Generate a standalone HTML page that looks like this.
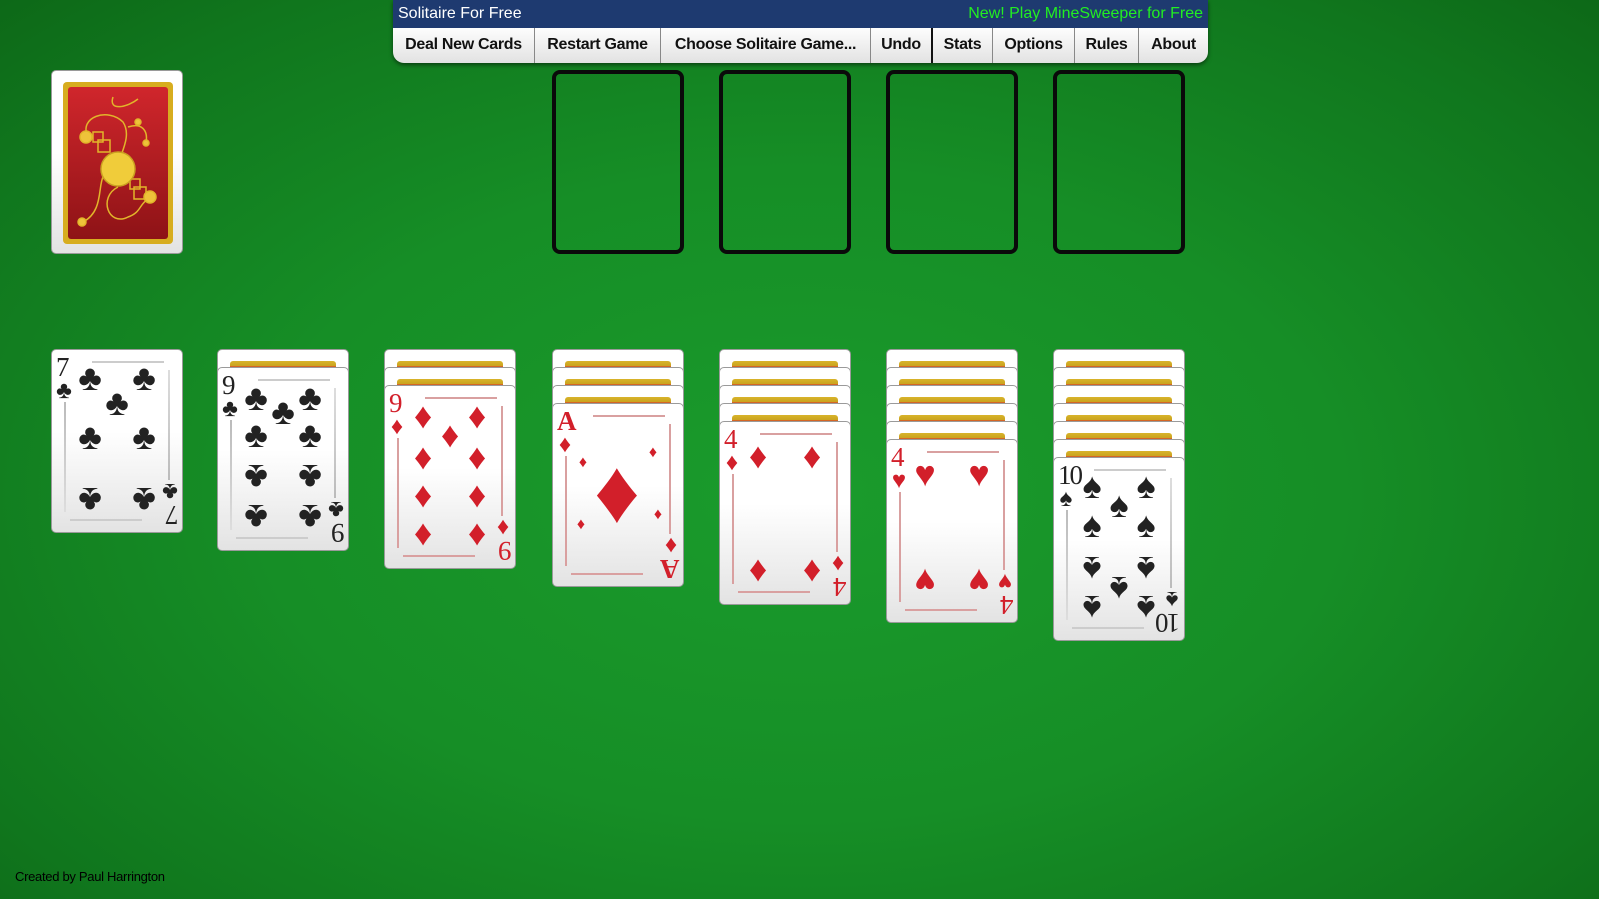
<!DOCTYPE html>
<html><head><meta charset="utf-8"><style>
*{margin:0;padding:0;box-sizing:border-box}
body{width:1599px;height:899px;overflow:hidden;position:relative;font-family:"Liberation Sans",Arial,sans-serif;
background:radial-gradient(ellipse 75% 80% at 50% 55%,#1a9b2c 0%,#168e26 45%,#10761d 80%,#0c6516 100%)}
#menu{position:absolute;left:393px;top:0;width:815px;height:63px;border-radius:0 0 11px 11px;overflow:hidden;box-shadow:0 2px 4px rgba(0,0,0,.5)}
#title{height:28px;background:#1e3a70;color:#fff;font-size:16px;line-height:27px;padding-left:5px;position:relative}
#title span{position:absolute;right:5px;top:0;color:#22ee22}
#btns{height:35px;background:linear-gradient(#fdfdfd,#e2e2e2);position:relative}
#btns div{position:absolute;top:0;height:35px;line-height:34px;text-align:center;font-weight:bold;font-size:16px;color:#111;border-left:1px solid #888;letter-spacing:-0.3px}
.card{position:absolute;width:132px;height:184px;border-radius:5px;border:1px solid #9a9a9a;background:linear-gradient(#fff 0%,#fff 45%,#e3e3e3 100%);overflow:hidden}
.down::after{content:"";position:absolute;left:12px;right:12px;top:11px;height:9px;border-radius:3px 3px 0 0;background:linear-gradient(#d8b42a 0,#c9a21e 60%,#e02a2a 60%,#e02a2a 100%)}
.slot{position:absolute;width:132px;height:184px;border:4px solid #0a0a0a;border-radius:8px}
.rk{position:absolute;font-family:"Liberation Serif",serif;font-size:27px;line-height:26px;left:4px;top:4px}
.rk2{position:absolute;font-family:"Liberation Serif",serif;font-size:27px;line-height:26px;right:4px;bottom:4px;transform:rotate(180deg)}
.cs{position:absolute;left:0;top:30px;font-size:24px;line-height:22px;width:24px;text-align:center}
.cs2{position:absolute;right:0;bottom:30px;font-size:24px;line-height:22px;width:24px;text-align:center;transform:rotate(180deg)}
.vl{position:absolute;left:12px;top:52px;width:2px;height:110px;background:linear-gradient(#bbb,#ddd)}
.vl2{position:absolute;right:12px;bottom:52px;width:2px;height:110px;background:linear-gradient(#ddd,#bbb)}
.hl{position:absolute;left:40px;top:11px;width:72px;height:2px;background:#ccc}
.hl2{position:absolute;right:40px;bottom:11px;width:72px;height:2px;background:#ccc}
.r .vl,.r .vl2,.r .hl,.r .hl2{background:#d9a0a0}
.p{position:absolute;width:36px;height:36px;margin-left:-18px;margin-top:-19px;text-align:center;font-size:36px;line-height:36px}
.i{transform:rotate(180deg)}
.b{color:#222}.r{color:#d21f2a}
</style></head><body>
<div id="menu">
<div id="title">Solitaire For Free<span>New! Play MineSweeper for Free</span></div>
<div id="btns">
<div style="left:0;width:141px;border-left:none">Deal New Cards</div>
<div style="left:141px;width:126px">Restart Game</div>
<div style="left:267px;width:210px">Choose Solitaire Game...</div>
<div style="left:477px;width:61px">Undo</div>
<div style="left:538px;width:61px;border-left:2px solid #111">Stats</div>
<div style="left:599px;width:82px">Options</div>
<div style="left:681px;width:64px">Rules</div>
<div style="left:745px;width:70px">About</div>
</div></div>

<div class="card" style="left:51px;top:70px">
<div style="position:absolute;left:11px;top:11px;width:110px;height:162px;border-radius:4px;background:#d7ad1f;padding:5px">
<div style="width:100%;height:100%;border-radius:3px;background:linear-gradient(#d0262c,#8e1316);position:relative">
<svg width="100" height="152" style="position:absolute;left:0;top:0" fill="none" stroke="#e2b52a" stroke-width="1.5">
<path d="M20 50 C10 30 40 20 55 35 C65 50 50 70 50 80"/><path d="M45 10 C40 25 60 20 70 12"/><path d="M50 100 C30 110 40 140 60 130 C75 125 70 115 85 110"/><path d="M35 90 C30 100 35 125 15 135"/><path d="M60 40 C75 35 80 45 78 55"/>
<rect x="25" y="45" width="10" height="10"/><rect x="30" y="53" width="12" height="12"/><rect x="62" y="92" width="10" height="10"/><rect x="66" y="100" width="12" height="12"/>
<circle cx="50" cy="82" r="17" fill="#f0cc3a" stroke="#caa020"/><circle cx="18" cy="50" r="6" fill="#eec33a"/><circle cx="82" cy="110" r="6" fill="#eec33a"/><circle cx="14" cy="135" r="4" fill="#eec33a"/><circle cx="70" cy="35" r="3" fill="#eec33a"/><circle cx="78" cy="56" r="3" fill="#eec33a"/>
</svg></div></div></div>

<div class="slot" style="left:552px;top:70px"></div>
<div class="slot" style="left:719px;top:70px"></div>
<div class="slot" style="left:886px;top:70px"></div>
<div class="slot" style="left:1053px;top:70px"></div>

<div class="card b" style="left:51px;top:349px"><div class="hl"></div><div class="hl2"></div><div class="vl"></div><div class="vl2"></div>
<div class="rk">7</div><div class="cs">♣</div><div class="rk2">7</div><div class="cs2">♣</div>
<div class="p" style="left:38px;top:29px">♣</div><div class="p" style="left:92px;top:29px">♣</div><div class="p" style="left:65px;top:54px">♣</div>
<div class="p" style="left:38px;top:88px">♣</div><div class="p" style="left:92px;top:88px">♣</div>
<div class="p i" style="left:38px;top:151px">♣</div><div class="p i" style="left:92px;top:151px">♣</div></div>

<div class="card down" style="left:217px;top:349px"></div>
<div class="card b" style="left:217px;top:367px"><div class="hl"></div><div class="hl2"></div><div class="vl"></div><div class="vl2"></div>
<div class="rk">9</div><div class="cs">♣</div><div class="rk2">9</div><div class="cs2">♣</div>
<div class="p" style="left:38px;top:31px">♣</div><div class="p" style="left:92px;top:31px">♣</div><div class="p" style="left:65px;top:45px">♣</div>
<div class="p" style="left:38px;top:68px">♣</div><div class="p" style="left:92px;top:68px">♣</div>
<div class="p i" style="left:38px;top:110px">♣</div><div class="p i" style="left:92px;top:110px">♣</div>
<div class="p i" style="left:38px;top:150px">♣</div><div class="p i" style="left:92px;top:150px">♣</div></div>

<div class="card down" style="left:384px;top:349px"></div>
<div class="card down" style="left:384px;top:367px"></div>
<div class="card r" style="left:384px;top:385px"><div class="hl"></div><div class="hl2"></div><div class="vl"></div><div class="vl2"></div>
<div class="rk">9</div><div class="cs">♦</div><div class="rk2">9</div><div class="cs2">♦</div>
<div class="p" style="left:38px;top:31px">♦</div><div class="p" style="left:92px;top:31px">♦</div><div class="p" style="left:65px;top:50px">♦</div>
<div class="p" style="left:38px;top:72px">♦</div><div class="p" style="left:92px;top:72px">♦</div>
<div class="p" style="left:38px;top:110px">♦</div><div class="p" style="left:92px;top:110px">♦</div>
<div class="p" style="left:38px;top:148px">♦</div><div class="p" style="left:92px;top:148px">♦</div></div>

<div class="card down" style="left:552px;top:349px"></div>
<div class="card down" style="left:552px;top:367px"></div>
<div class="card down" style="left:552px;top:385px"></div>
<div class="card r" style="left:552px;top:403px"><div class="hl"></div><div class="hl2"></div><div class="vl"></div><div class="vl2"></div>
<div class="rk" style="font-weight:bold">A</div><div class="cs">♦</div><div class="rk2" style="font-weight:bold">A</div><div class="cs2">♦</div>
<div class="p" style="left:64px;top:88px;font-size:90px;width:90px;height:90px;line-height:90px;margin-left:-45px;margin-top:-45px">♦</div>
<div class="p" style="left:100px;top:50px;font-size:16px">♦</div><div class="p" style="left:30px;top:60px;font-size:16px">♦</div>
<div class="p" style="left:105px;top:112px;font-size:16px">♦</div><div class="p" style="left:28px;top:122px;font-size:16px">♦</div></div>

<div class="card down" style="left:719px;top:349px"></div>
<div class="card down" style="left:719px;top:367px"></div>
<div class="card down" style="left:719px;top:385px"></div>
<div class="card down" style="left:719px;top:403px"></div>
<div class="card r" style="left:719px;top:421px"><div class="hl"></div><div class="hl2"></div><div class="vl"></div><div class="vl2"></div>
<div class="rk">4</div><div class="cs">♦</div><div class="rk2">4</div><div class="cs2">♦</div>
<div class="p" style="left:38px;top:35px">♦</div><div class="p" style="left:92px;top:35px">♦</div>
<div class="p" style="left:38px;top:148px">♦</div><div class="p" style="left:92px;top:148px">♦</div></div>

<div class="card down" style="left:886px;top:349px"></div>
<div class="card down" style="left:886px;top:367px"></div>
<div class="card down" style="left:886px;top:385px"></div>
<div class="card down" style="left:886px;top:403px"></div>
<div class="card down" style="left:886px;top:421px"></div>
<div class="card r" style="left:886px;top:439px"><div class="hl"></div><div class="hl2"></div><div class="vl"></div><div class="vl2"></div>
<div class="rk">4</div><div class="cs">♥</div><div class="rk2">4</div><div class="cs2">♥</div>
<div class="p" style="left:38px;top:35px">♥</div><div class="p" style="left:92px;top:35px">♥</div>
<div class="p i" style="left:38px;top:142px">♥</div><div class="p i" style="left:92px;top:142px">♥</div></div>

<div class="card down" style="left:1053px;top:349px"></div>
<div class="card down" style="left:1053px;top:367px"></div>
<div class="card down" style="left:1053px;top:385px"></div>
<div class="card down" style="left:1053px;top:403px"></div>
<div class="card down" style="left:1053px;top:421px"></div>
<div class="card down" style="left:1053px;top:439px"></div>
<div class="card b" style="left:1053px;top:457px"><div class="hl"></div><div class="hl2"></div><div class="vl"></div><div class="vl2"></div>
<div class="rk" style="letter-spacing:-2px">10</div><div class="cs">♠</div><div class="rk2" style="letter-spacing:-2px">10</div><div class="cs2">♠</div>
<div class="p" style="left:38px;top:29px">♠</div><div class="p" style="left:92px;top:29px">♠</div><div class="p" style="left:65px;top:48px">♠</div>
<div class="p" style="left:38px;top:68px">♠</div><div class="p" style="left:92px;top:68px">♠</div>
<div class="p i" style="left:38px;top:112px">♠</div><div class="p i" style="left:92px;top:112px">♠</div><div class="p i" style="left:65px;top:132px">♠</div>
<div class="p i" style="left:38px;top:151px">♠</div><div class="p i" style="left:92px;top:151px">♠</div></div>

<div style="position:absolute;left:15px;top:869px;font-size:13px;color:#000;letter-spacing:-0.3px">Created by Paul Harrington</div>
</body></html>
